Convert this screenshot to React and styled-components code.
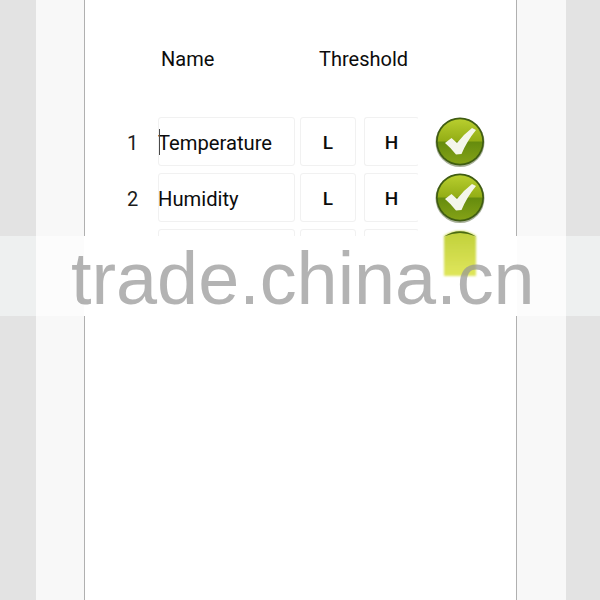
import React from 'react'
import styled, { createGlobalStyle } from 'styled-components'

const GlobalStyle = createGlobalStyle`
  html, body {
    margin: 0;
    padding: 0;
    height: 600px;
    overflow: hidden;
    background: #e3e3e3;
    font-family: Roboto, "Liberation Sans", sans-serif;
  }
`

const Page = styled.div`
  position: relative;
  height: 600px;
  padding-left: 36px;
  overflow: hidden;
`

const Sheet = styled.div`
  width: 530px;
  padding: 0 49px 0 48px;
  box-sizing: border-box;
  background: #f8f8f8;
`

const Panel = styled.div`
  height: 600px;
  box-sizing: border-box;
  padding-top: 47px;
  background: #fff;
  border-left: 1px solid #b0b0b0;
  border-right: 1px solid #b0b0b0;
`

const Header = styled.div`
  display: flex;
  height: 24px;
  margin-bottom: 46px;
  padding-left: 76px;
  font-size: 20px;
  line-height: 24px;
  color: #0c0c0c;
`

const HeaderName = styled.div`
  width: 158px;
`

const Rows = styled.div`
  display: flex;
  flex-direction: column;
  gap: 7px;
`

const Row = styled.div`
  display: flex;
  align-items: center;
  height: 49px;
`

const Num = styled.div`
  width: 73px;
  padding: 2px 0 0 42px;
  box-sizing: border-box;
  font-size: 20px;
  color: #1c1c1c;
`

const Cell = styled.div`
  position: relative;
  display: flex;
  align-items: center;
  justify-content: ${p => (p.$center ? 'center' : 'flex-start')};
  box-sizing: border-box;
  width: ${p => p.$width}px;
  height: 49px;
  padding-top: 2px;
  margin-left: ${p => p.$gap || 0}px;
  border: 1px solid #f1f1f1;
  border-right-color: ${p => (p.$open ? 'transparent' : '#f1f1f1')};
  border-radius: 3px;
  font-size: ${p => (p.$center ? 19 : 20.2)}px;
  font-weight: ${p => (p.$center ? 500 : 400)};
  color: #0c0c0c;
`

const NameText = styled.span`
  margin-left: -1px;
`

const Caret = styled.span`
  position: absolute;
  left: 0;
  top: 11px;
  width: 1px;
  height: 26px;
  background: #4a4a4a;
`

const IconSlot = styled.div`
  position: relative;
  z-index: ${p => (p.$raised ? 2 : 0)};
  width: 50px;
  height: 50px;
  margin: 1px 0 0 16px;
`

const Band = styled.div`
  position: absolute;
  z-index: 1;
  left: 0;
  right: 0;
  top: 236px;
  height: 80px;
  background: linear-gradient(
    90deg,
    #eef0f0 0 36px,
    #fcfcfc 36px 84px,
    #fff 84px 517px,
    #fcfcfc 517px 566px,
    #eef0f0 566px
  );
`

const Watermark = styled.div`
  position: absolute;
  z-index: 3;
  left: 71px;
  top: 236px;
  height: 80px;
  font-family: "Liberation Sans", Arial, sans-serif;
  font-size: 73.8px;
  line-height: 86px;
  color: rgba(150, 150, 150, 0.72);
  white-space: nowrap;
`

const CheckIcon = ({ id }) => (
  <svg width="50" height="50" viewBox="0 0 50 50">
    <defs>
      <linearGradient id={`${id}-ball`} x1="0" y1="0" x2="0" y2="1">
        <stop offset="0" stopColor="#b8ce2e" />
        <stop offset="0.48" stopColor="#94ae16" />
        <stop offset="0.52" stopColor="#668c0e" />
        <stop offset="1" stopColor="#84a216" />
      </linearGradient>
    </defs>
    <circle cx="25" cy="25.5" r="24.5" fill="#a8b09a" />
    <circle cx="25" cy="24.5" r="24" fill="#3f5c12" />
    <circle cx="25" cy="24.5" r="22.3" fill={`url(#${id}-ball)`} />
    <path
      d="M10 26 L16.5 21 L22 26 Q29 17 37 11 L41 13 Q32 24 26.5 37 L21 37.5 Q16 31 10 26 Z"
      fill="#f4f6ea"
    />
  </svg>
)

const SmearedIcon = () => (
  <svg width="50" height="50" viewBox="0 0 50 50">
    <defs>
      <linearGradient id="smear-fill" x1="0" y1="0" x2="0" y2="1">
        <stop offset="0" stopColor="#c0d03a" />
        <stop offset="1" stopColor="#e0e65c" />
      </linearGradient>
      <filter id="smear-soft">
        <feGaussianBlur stdDeviation="0.8" />
      </filter>
    </defs>
    <path d="M9 7 Q25 -3 41 7 L41 47 L9 47 Z" fill="url(#smear-fill)" filter="url(#smear-soft)" />
    <path d="M9 7.5 Q25 -3 41 7.5 Q25 0.5 9 7.5 Z" fill="#4b6a12" />
  </svg>
)

const rows = [
  { n: 1, name: 'Temperature', low: 'L', high: 'H', caret: true },
  { n: 2, name: 'Humidity', low: 'L', high: 'H' },
  { n: 3, name: '', low: '', high: '', smeared: true }
]

const App = () => (
  <Page>
    <GlobalStyle />
    <Sheet>
      <Panel>
        <Header>
          <HeaderName>Name</HeaderName>
          <div>Threshold</div>
        </Header>
        <Rows>
          {rows.map(row => (
            <Row key={row.n}>
              <Num>{row.smeared ? '' : row.n}</Num>
              <Cell $width={137}>
                {row.caret && <Caret />}
                <NameText>{row.name}</NameText>
              </Cell>
              <Cell $width={56} $gap={5} $center>
                {row.low}
              </Cell>
              <Cell $width={55} $gap={8} $center $open>
                {row.high}
              </Cell>
              <IconSlot $raised={row.smeared}>
                {row.smeared ? <SmearedIcon /> : <CheckIcon id={`check-${row.n}`} />}
              </IconSlot>
            </Row>
          ))}
        </Rows>
      </Panel>
    </Sheet>
    <Band />
    <Watermark>trade.china.cn</Watermark>
  </Page>
)

export default App
